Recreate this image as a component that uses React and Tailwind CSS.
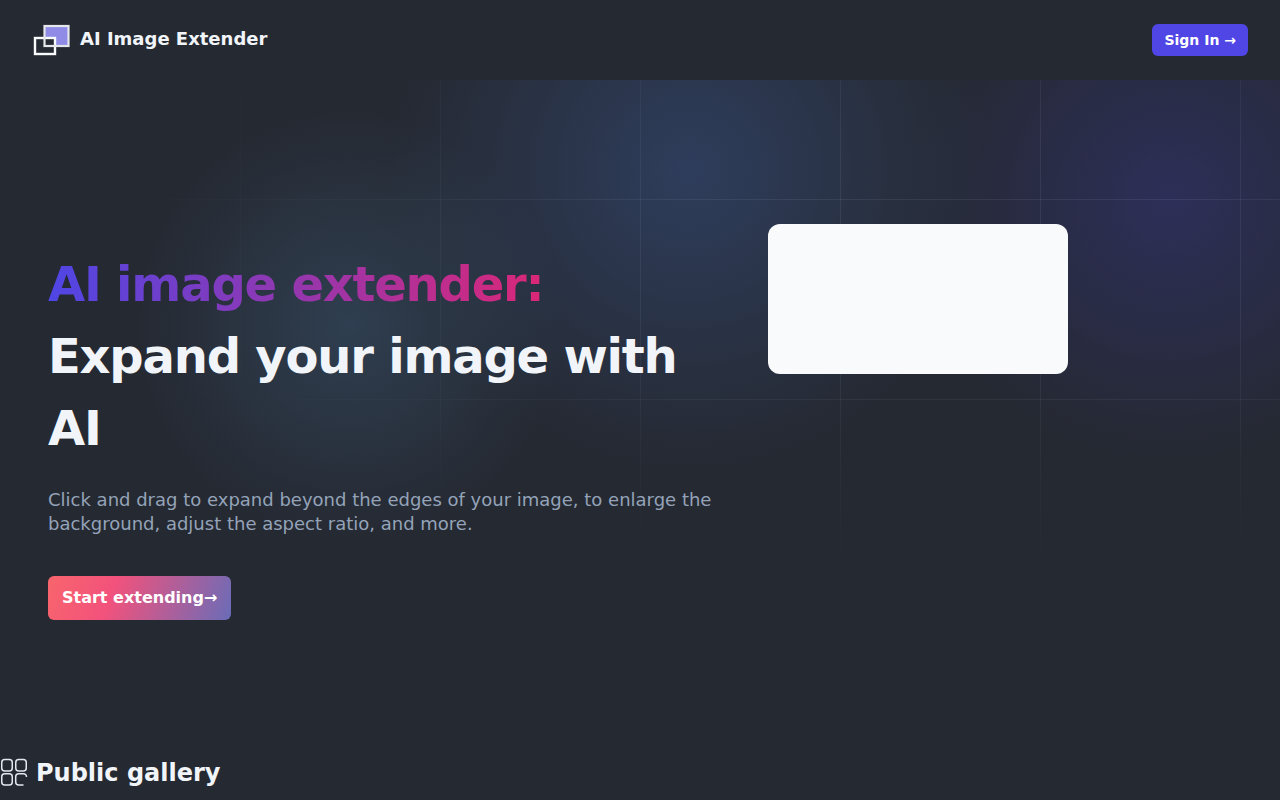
const dejavu = "font-['DejaVu_Sans',sans-serif]";

function Logo() {
  return (
    <svg width="38" height="32" viewBox="0 0 38 32" fill="none" className="shrink-0 -mr-0.5">
      <rect x="12.5" y="2" width="24" height="20" fill="#8f8be6" />
      <rect x="3" y="14" width="20" height="16" fill="#252932" stroke="#f8fafc" strokeWidth="2.4" />
      <rect x="12.5" y="2" width="24" height="20" stroke="#e5e7eb" strokeWidth="2.2" />
    </svg>
  );
}

function GalleryIcon() {
  return (
    <svg width="28" height="28" viewBox="0 0 28 28" fill="none" stroke="#e2e8f0" strokeWidth="1.5" className="shrink-0 -mt-0.5">
      <rect x="1.75" y="1.45" width="10.5" height="11.5" rx="3" />
      <rect x="15.75" y="1.45" width="10.5" height="11.5" rx="3" />
      <rect x="1.75" y="15.75" width="10.5" height="11.2" rx="3" />
      <path d="M26.5 19V18.7a3 3 0 0 0-3-3H18.7a3 3 0 0 0-3 3v5.3a3 3 0 0 0 3 3h4.8" />
    </svg>
  );
}

export default function App() {
  return (
    <div className={`${dejavu} min-h-[800px] bg-[#252932] text-[#f1f5f9] overflow-hidden`}>
      <header className="h-20 flex items-start justify-between px-8 pt-6">
        <div className="flex items-center gap-3">
          <Logo />
          <span className="text-lg font-semibold -mt-0.5">AI Image Extender</span>
        </div>
        <button className="h-8 px-3 rounded-md bg-[#4f46e5] text-white text-sm font-semibold">Sign In →</button>
      </header>

      <main className="relative h-[660px]">
        <div className="absolute inset-0 bg-[radial-gradient(circle_at_350px_245px,rgba(56,82,108,0.52),transparent_215px),radial-gradient(circle_at_690px_90px,rgba(52,74,118,0.62),transparent_300px),radial-gradient(circle_at_1170px_120px,rgba(50,50,112,0.62),transparent_260px)]" />
        <div className="absolute inset-0 bg-[linear-gradient(to_right,rgba(148,163,184,0.13)_1px,transparent_1px),linear-gradient(to_bottom,rgba(148,163,184,0.13)_1px,transparent_1px)] bg-[size:200px_200px] bg-[position:40px_119px] [mask-image:radial-gradient(ellipse_68%_50%_at_75%_25%,black_30%,transparent_100%)]" />
        <div className="relative flex items-start gap-12 pl-12 pt-36">
          <div className="w-[672px] shrink-0 pt-6">
            <h1 className="text-5xl font-bold tracking-tight leading-[72px]">
              <span className="bg-[linear-gradient(to_right,#4f46e5,#db2777)] bg-clip-text text-transparent">AI image extender:</span>
              <br />
              Expand your image with AI
            </h1>
            <p className="mt-6 text-lg leading-6 text-[#94a3b8]">
              Click and drag to expand beyond the edges of your image, to enlarge the background, adjust the aspect ratio, and more.
            </p>
            <button className="mt-10 h-11 px-[14px] rounded-md text-white font-semibold bg-[linear-gradient(110deg,#f8656c_0%,#f2527c_35%,#6a6cb8_100%)]">Start extending→</button>
          </div>
          <div className="w-[300px] h-[150px] rounded-xl bg-[#f8fafc]" />
        </div>
      </main>

      <section className="flex items-center gap-2 pt-[17px]">
        <GalleryIcon />
        <h2 className="text-2xl font-bold">Public gallery</h2>
      </section>
    </div>
  );
}
